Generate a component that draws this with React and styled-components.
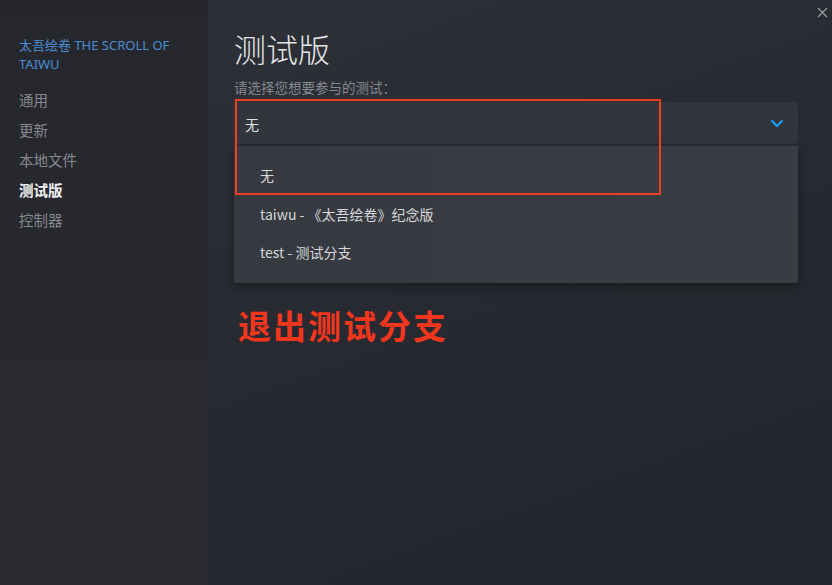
import styled, { createGlobalStyle } from 'styled-components';

const GlobalStyle = createGlobalStyle`
    html, body {
        margin: 0;
        padding: 0;
        background: #25272c;
    }
    body {
        font-family: "Noto Sans", "Noto Sans CJK SC", sans-serif;
    }
`;

const navItems = ['通用', '更新', '本地文件', '测试版', '控制器'];
const options = ['无', 'taiwu - 《太吾绘卷》纪念版', 'test - 测试分支'];

const App = () => {
    return (
        <>
            <GlobalStyle />
            <Window>
                <Sidebar>
                    <GameTitle>太吾绘卷 THE SCROLL OF TAIWU</GameTitle>
                    <Nav>
                        {navItems.map((item) => (
                            <NavItem key={item} $active={item === '测试版'}>{item}</NavItem>
                        ))}
                    </Nav>
                </Sidebar>
                <Main>
                    <CloseButton>
                        <svg width="11" height="11" viewBox="0 0 11 11">
                            <path d="M1 1L10 10M10 1L1 10" stroke="#9a9ca1" strokeWidth="1.3" fill="none" />
                        </svg>
                    </CloseButton>
                    <Title>测试版</Title>
                    <Label>请选择您想要参与的测试：</Label>
                    <SelectWrap>
                        <Select>
                            <span>无</span>
                            <svg width="14" height="9" viewBox="0 0 14 9">
                                <path d="M1.5 1.5L7 7L12.5 1.5" stroke="#1a9fff" strokeWidth="2.2" fill="none" />
                            </svg>
                        </Select>
                        <Menu>
                            {options.map((opt) => (
                                <Option key={opt}>{opt}</Option>
                            ))}
                        </Menu>
                        <Highlight />
                    </SelectWrap>
                    <Annotation>退出测试分支</Annotation>
                </Main>
            </Window>
        </>
    );
};

export default App;

const Window = styled.div`
    width: 832px;
    height: 585px;
    display: flex;
    overflow: hidden;
`;

const Sidebar = styled.div`
    width: 208px;
    flex-shrink: 0;
    background: linear-gradient(180deg, #25272c 0%, #292b30 100%);
    padding: 36px 0 0 19px;
    box-sizing: border-box;
`;

const GameTitle = styled.div`
    color: #4c8ed6;
    font-size: 13px;
    line-height: 19px;
    width: 170px;
`;

const Nav = styled.div`
    display: flex;
    flex-direction: column;
    margin-top: 11px;
`;

const NavItem = styled.div`
    font-family: "Noto Sans CJK SC", sans-serif;
    font-size: 14.5px;
    line-height: 30px;
    color: ${(p) => (p.$active ? '#f2f3f4' : '#86898e')};
    font-weight: ${(p) => (p.$active ? 700 : 400)};
`;

const Main = styled.div`
    position: relative;
    flex: 1;
    background: linear-gradient(160deg, #2d3037 0%, #272a31 45%, #22252c 100%);
    padding: 26px 34px 0 26px;
    box-sizing: border-box;
`;

const CloseButton = styled.div`
    position: absolute;
    top: 1px;
    right: 4px;
    width: 11px;
    height: 11px;
`;

const Title = styled.h1`
    margin: 0;
    font-family: "Noto Sans CJK SC", sans-serif;
    font-weight: 300;
    font-size: 32px;
    line-height: 44px;
    color: #e4e5e7;
`;

const Label = styled.div`
    font-family: "Noto Sans CJK SC", sans-serif;
    font-size: 13.5px;
    line-height: 20px;
    color: #858990;
    margin-top: 7px;
`;

const SelectWrap = styled.div`
    position: relative;
    margin-top: 5px;
`;

const Select = styled.div`
    height: 43px;
    background: #32353c;
    border-radius: 3px;
    display: flex;
    align-items: center;
    justify-content: space-between;
    padding: 0 14px 0 11px;
    font-family: "Noto Sans CJK SC", sans-serif;
    font-size: 14px;
    color: #e3e4e6;
    box-shadow: inset 0 -1px 0 #272a30;
`;

const Menu = styled.div`
    position: absolute;
    top: 44px;
    left: 0;
    right: 0;
    height: 137px;
    background: linear-gradient(90deg, #363940 0%, #393c43 100%);
    border-radius: 0 0 3px 3px;
    box-shadow: 0 4px 10px rgba(0, 0, 0, 0.35);
    padding-top: 17px;
    box-sizing: border-box;
`;

const Option = styled.div`
    height: 38.5px;
    line-height: 24px;
    padding-left: 26px;
    font-family: "Noto Sans CJK SC", sans-serif;
    font-size: 14px;
    color: #d7d8da;
`;

const Highlight = styled.div`
    position: absolute;
    top: -3px;
    left: 1px;
    width: 426px;
    height: 96px;
    border: 2px solid #e8412b;
    box-sizing: border-box;
`;

const Annotation = styled.div`
    margin-top: 158px;
    margin-left: 4px;
    font-family: "Noto Sans CJK SC", sans-serif;
    font-weight: 700;
    font-size: 33px;
    line-height: 44px;
    color: #f2361d;
    letter-spacing: 2px;
`;
